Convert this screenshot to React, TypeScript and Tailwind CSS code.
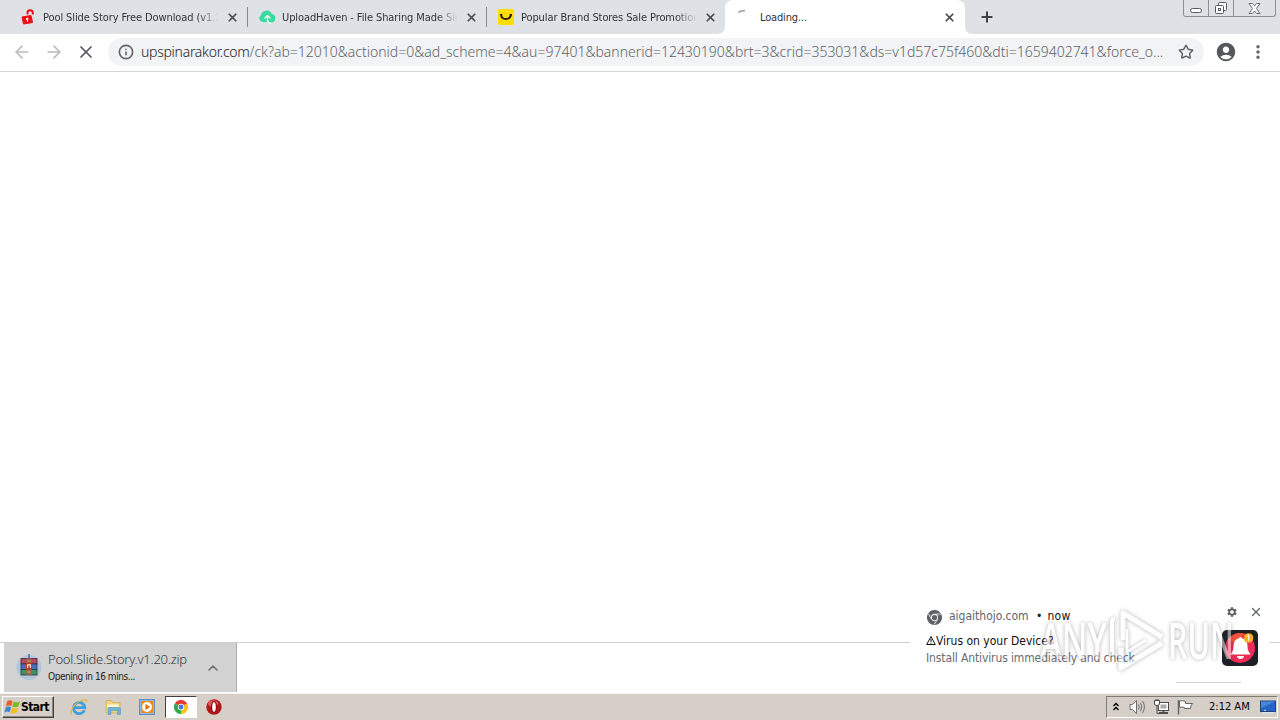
import React from 'react';
import { ArrowLeft, ArrowRight, X, Info, Star, Plus, MoreVertical, ChevronUp } from 'lucide-react';
import { MdSettings, MdAccountCircle } from 'react-icons/md';

const LockIcon = () => (
  <svg width="16" height="16" viewBox="0 0 16 16">
    <path d="M2 8 L11 6.5 L12.5 13.5 L3.5 15 Z" fill="#f00d14" stroke="#f00d14" strokeLinejoin="round" />
    <path d="M7.5 5.5 V4.2 A2.6 2.6 0 0 1 12.8 3.6 V5.5" fill="none" stroke="#e8121c" strokeWidth="1.9" />
    <circle cx="7.2" cy="10" r="1.2" fill="#fff" />
    <path d="M7.2 10 L7.7 12.7" stroke="#fff" strokeWidth="1" />
  </svg>
);

const CloudIcon = () => (
  <svg width="16" height="16" viewBox="0 0 16 16">
    <path d="M4 13 A3.6 3.6 0 0 1 1.8 6.5 A5.8 5.8 0 0 1 12.8 5 A4.2 4.2 0 0 1 12 13.5 Z" fill="#3adb9f" />
    <path d="M5.5 9.5 L8.5 6.5 L11.5 9.5 M8.5 7.5 V12 Q9 14 12 14.5" fill="none" stroke="#e9f8f3" strokeWidth="1.4" />
  </svg>
);

const SmileIcon = () => (
  <svg width="16" height="16" viewBox="0 0 16 16">
    <rect width="16" height="16" rx="1" fill="#ffde00" />
    <path d="M3 5.5 C3.5 11.5 12 11.5 13 5.5" fill="none" stroke="#1c1c1c" strokeWidth="1.9" />
    <path d="M2 5.7 H4.3 M11.7 5.7 H14" stroke="#1c1c1c" strokeWidth="1.3" />
  </svg>
);

const SpinnerIcon = () => (
  <svg width="16" height="16" viewBox="0 0 16 16">
    <path d="M1.5 3.5 Q4 1.2 8 1.6" fill="none" stroke="#a7a9ac" strokeWidth="1.8" />
  </svg>
);

const ChromeIcon = ({ mono = false }: { mono?: boolean }) => (
  <svg width={mono ? 15 : 14} height={mono ? 15 : 14} viewBox="0 0 24 24">
    <path d="M12 12 L1.6 6 A12 12 0 0 1 22.4 6 Z" fill={mono ? '#5f6368' : '#e33b2e'} />
    <path d="M12 12 L22.4 6 A12 12 0 0 1 12 24 Z" fill={mono ? '#5f6368' : '#fbc116'} />
    <path d="M12 12 L12 24 A12 12 0 0 1 1.6 6 Z" fill={mono ? '#5f6368' : '#2da94f'} />
    {mono && <path d="M12 6.5 H22 M7.2 14.7 L2.4 6.5 M16.8 14.7 L12 23" stroke="#d5d7d9" strokeWidth="1.6" />}
    <circle cx="12" cy="12" r="5.5" fill="#fff" />
    <circle cx="12" cy="12" r="4.2" fill={mono ? '#5f6368' : '#3e7be0'} />
  </svg>
);

const WinrarIcon = () => (
  <svg width="26" height="27" viewBox="0 0 26 27">
    <circle cx="13" cy="13.5" r="12.4" fill="#b3c4dd" />
    <path d="M13 0 V4" stroke="#4a72a8" strokeWidth="1.5" />
    <rect x="5" y="4.5" width="16" height="5.5" fill="#b5475f" stroke="#51263a" strokeWidth=".8" />
    <rect x="5" y="10" width="16" height="5.5" fill="#4a6fba" stroke="#26345b" strokeWidth=".8" />
    <rect x="5" y="15.5" width="16" height="5.5" fill="#3f8f5f" stroke="#234331" strokeWidth=".8" />
    <rect x="10.3" y="4.5" width="5.4" height="16.5" fill="#9a6540" />
    <path d="M10 9 H16 V15.5 H10 Z" fill="#c23324" />
    <path d="M11.6 14 V10.8 H14.4 V14" stroke="#f0e8df" fill="none" strokeWidth="1.2" />
    <path d="M11 18 H15 M11 7 H15" stroke="#d3ad73" strokeWidth=".8" />
  </svg>
);

const WindowsFlag = () => (
  <svg width="17" height="16" viewBox="0 0 16 15" className="shrink-0">
    <path d="M3 2.2 Q5.5 .2 8 2 L6.8 6.7 Q4.3 5.2 1.8 7 Z" fill="#ea5b2d" />
    <path d="M9 2.4 Q11.5 4 15 2 L13.7 6.8 Q11 8.8 7.8 7 Z" fill="#7cb928" />
    <path d="M1.6 7.9 Q4.2 6.2 6.6 7.8 L5.3 12.6 Q3 11 .4 12.8 Z" fill="#3786d8" />
    <path d="M7.6 8 Q10.4 9.8 13.4 7.9 L12.2 12.4 Q9.2 14.5 6.3 12.8 Z" fill="#f8bd1d" />
  </svg>
);

const IeIcon = () => (
  <svg width="18" height="18" viewBox="0 0 18 18">
    <path d="M14.4 12.2 A5.6 5.6 0 1 1 14.8 9.6 H4.5" fill="none" stroke="#3d9fdd" strokeWidth="2.8" />
    <path d="M1.6 16.5 C-1 12 6 4 13 2 C16 1 17.3 2 16.3 4.5" fill="none" stroke="#e3b53f" strokeWidth="1.3" />
  </svg>
);

const FolderIcon = () => (
  <svg width="17" height="16" viewBox="0 0 17 16">
    <path d="M1 1.5 H6 L7.5 3.5 H15 V14 H1 Z" fill="#f2d57b" stroke="#cfa94a" strokeWidth=".7" />
    <path d="M2 5.5 H14 V8 H2 Z" fill="#fdf6d6" />
    <path d="M3 15.5 V10 Q3 8.5 4.5 8.5 H14 Q15.5 8.5 15.5 10 V15.5 H12.5 V11.5 H6 V15.5 Z" fill="#67b5dd" stroke="#4b90b8" strokeWidth=".5" />
  </svg>
);

const MediaIcon = () => (
  <svg width="16" height="16" viewBox="0 0 16 16">
    <rect x=".5" y=".5" width="15" height="15" fill="#8fbbe6" stroke="#5b8fc5" />
    <rect x="2" y="2" width="12" height="12" fill="#f08a18" />
    <circle cx="8" cy="8" r="4.9" fill="#fff" />
    <path d="M6.4 4.8 L11.3 8 L6.4 11.2 Z" fill="#e6760c" />
  </svg>
);

const OperaIcon = () => (
  <svg width="16" height="16" viewBox="0 0 16 16">
    <circle cx="8" cy="8" r="7.7" fill="#b0181d" />
    <ellipse cx="7" cy="4.5" rx="5.2" ry="3.3" fill="#dc5a5a" />
    <ellipse cx="8" cy="8" rx="3.1" ry="5.9" fill="#8c0b11" />
    <ellipse cx="8" cy="8" rx="1.8" ry="4.7" fill="#fff" />
  </svg>
);

const SpeakerIcon = () => (
  <svg width="17" height="16" viewBox="0 0 17 16" fill="none">
    <path d="M1 5.5 H3.5 L7.5 1.5 V14.5 L3.5 10.5 H1 Z" fill="#fff" stroke="#6c6c6c" />
    <path d="M9.5 5.5 Q11 8 9.5 10.5 M11.5 3.8 Q14 8 11.5 12.2 M13.5 2 Q17.3 8 13.5 14" stroke="#6c6c6c" />
  </svg>
);

const NetworkIcon = () => (
  <svg width="17" height="16" viewBox="0 0 17 16">
    <rect x="5.5" y="3.5" width="10" height="8" fill="#fff" stroke="#4c4c4c" />
    <rect x="7.5" y="5.5" width="6" height="4" fill="#aaa" />
    <path d="M6 14 H15 M10.5 12 V14" stroke="#4c4c4c" strokeWidth="1.8" />
    <path d="M1.5 1.5 H6.5 V5 Q6.5 6.5 4 6.5 Q1.5 6.5 1.5 5 Z" fill="#fff" stroke="#4c4c4c" />
    <path d="M4 6.5 V14.5 H7 M3 0 V2 M5 0 V2" stroke="#4c4c4c" fill="none" />
  </svg>
);

const FlagIcon = () => (
  <svg width="17" height="16" viewBox="0 0 17 16">
    <path d="M1.5 1 V15.5" stroke="#666" strokeWidth="1.5" />
    <path d="M2.5 2 Q5 1 8.5 2.5 V4.5 H15.5 Q13.5 6.5 13.5 9.5 H7.5 V8.5 Q5 7.5 2.5 8.5 Z" fill="#fff" stroke="#666" />
  </svg>
);

const MonitorIcon = () => (
  <svg width="16" height="14" viewBox="0 0 16 14">
    <rect x=".5" y="1" width="15" height="10.5" fill="#2365c7" stroke="#234478" />
    <path d="M1 1.5 H15 L1 8 Z" fill="#4787d8" />
    <path d="M3 12.8 H13" stroke="#dcebfa" strokeWidth="1.2" />
    <path d="M4 10.3 H6" stroke="#cfe6fb" />
  </svg>
);

const BellIcon = () => (
  <svg width="36" height="36" viewBox="0 0 36 36">
    <rect width="36" height="36" rx="5" fill="#1d2027" />
    <circle cx="18" cy="18" r="15" fill="#ec2c54" />
    <path d="M5.5 10 A15 15 0 0 1 22.5 3.7 L13 13 Z" fill="#f0523b" />
    <path d="M8 24.5 Q11.5 22 11.5 16 Q11.5 9.5 17 8.3 Q18.5 5.5 20 8.3 Q25.5 9.5 25.5 16 Q25.5 22 29 24.5 Z" fill="#fff" />
    <path d="M15 26 H22 Q21.5 29 18.5 29 Q15.5 29 15 26 Z" fill="#fff" />
    <circle cx="26.5" cy="8" r="4.8" fill="#ffab26" />
    <path d="M25.3 6.3 L26.7 5.3 V10.8" fill="none" stroke="#fff" strokeWidth="1.1" />
  </svg>
);

const Watermark = () => (
  <svg width="204" height="76" viewBox="0 0 204 76" className="pointer-events-none absolute left-[1036px] top-[602px] opacity-50 drop-shadow-[0_0_2px_rgba(60,60,60,0.8)]">
    <g fill="none" stroke="#fff" strokeLinejoin="round">
      <path d="M76 54 V20 Q76 17 79 17" strokeWidth="4" />
      <path d="M87 38 V11 L126 35" strokeWidth="5" />
      <path d="M85 46 V66 L126 41" strokeWidth="5" />
      <path d="M91 27 V50 L110 38" strokeWidth="2.5" />
    </g>
    <g fontFamily="Open Sans, sans-serif" fontSize="50" fontWeight="600" fill="#fff">
      <text x="4" y="57" textLength="67" lengthAdjust="spacingAndGlyphs">ANY</text>
      <text x="132" y="57" textLength="66" lengthAdjust="spacingAndGlyphs">RUN</text>
    </g>
  </svg>
);

interface TabProps {
  icon: React.ReactNode;
  title: string;
}

const Tab: React.FC<TabProps> = ({ icon, title }) => (
  <div className="flex h-[34px] w-[239px] shrink-0 items-center pl-3 pr-2">
    <span className="w-4 shrink-0">{icon}</span>
    <span className="ml-[7px] mt-px w-[176px] shrink-0 overflow-hidden whitespace-nowrap text-[11px] leading-4 tracking-[-0.1px] text-[#303338] [mask-image:linear-gradient(to_right,black_88%,transparent)]">
      {title}
    </span>
    <X size={13} strokeWidth={3.2} className="ml-[6.5px] shrink-0 text-[#46494d]" />
  </div>
);

const ActiveTab: React.FC<TabProps> = ({ icon, title }) => (
  <div className="flex h-[34px] w-[240px] shrink-0 items-center rounded-t-lg bg-white pl-3">
    <span className="w-4 shrink-0">{icon}</span>
    <span className="ml-[7px] mt-px w-[176px] shrink-0 whitespace-nowrap text-[11px] leading-4 tracking-[-0.15px] text-[#303338]">{title}</span>
    <X size={13} strokeWidth={3.2} className="ml-[6.5px] shrink-0 text-[#46494d]" />
  </div>
);

const TabStrip = () => (
  <div className="flex h-[34px] items-center bg-[#dee1e6] pl-2">
    <Tab icon={<LockIcon />} title="Pool Slide Story Free Download (v1.20)" />
    <div className="-mr-px h-5 w-px bg-[#85888d]" />
    <Tab icon={<CloudIcon />} title="UploadHaven - File Sharing Made Simple" />
    <div className="-mr-px h-5 w-px bg-[#85888d]" />
    <Tab icon={<SmileIcon />} title="Popular Brand Stores Sale Promotions" />
    <svg width="8" height="8" viewBox="0 0 8 8" className="-ml-2 shrink-0 self-end">
      <path d="M8 0 V8 H0 Q8 8 8 0 Z" fill="#fff" />
    </svg>
    <ActiveTab icon={<SpinnerIcon />} title="Loading..." />
    <svg width="8" height="8" viewBox="0 0 8 8" className="shrink-0 self-end">
      <path d="M0 0 V8 H8 Q0 8 0 0 Z" fill="#fff" />
    </svg>
    <Plus size={16} strokeWidth={3} className="ml-[6px] text-[#3c4043]" />
    <div className="ml-auto mr-[4px] flex h-[17px] w-[93px] shrink-0 self-start rounded-b-[3px] border border-t-0 border-[#8b8f96]">
      <div className="flex w-[25px] items-end justify-center border-r border-[#8b8f96] pb-[3px]">
        <div className="h-[5px] w-3 rounded-sm border border-[#555960] bg-white" />
      </div>
      <div className="flex w-[25px] items-center justify-center border-r border-[#8b8f96]">
        <svg width="14" height="14" viewBox="0 0 14 14" fill="#fff" stroke="#555960">
          <rect x="4.5" y="1.5" width="8" height="8" rx="1" />
          <rect x="1.5" y="4.5" width="8" height="8" rx="1" />
          <rect x="4.5" y="7.5" width="2" height="2" />
        </svg>
      </div>
      <div className="flex flex-1 items-center justify-center">
        <svg width="13" height="11" viewBox="0 0 13 11" fill="#fff" stroke="#666a70">
          <path d="M1 .5 H4.5 L6.5 3 L8.5 .5 H12 L8.5 5.5 L12 10.5 H8.5 L6.5 8 L4.5 10.5 H1 L4.5 5.5 Z" />
        </svg>
      </div>
    </div>
  </div>
);

const Toolbar = () => (
  <div className="flex h-[38px] items-center border-b border-[#d5d6d8] bg-white pb-px pl-3">
    <ArrowLeft size={20} strokeWidth={1.9} className="text-[#b9bbbe]" />
    <ArrowRight size={20} strokeWidth={1.9} className="ml-3 text-[#b9bbbe]" />
    <X size={20} strokeWidth={2.1} className="ml-3 text-[#55585c]" />
    <div className="ml-3 flex h-7 w-[1096px] shrink-0 items-center rounded-full bg-[#f1f3f4] pl-[10px]">
      <Info size={16} strokeWidth={2.4} className="shrink-0 text-[#5f6368]" />
      <div className="ml-[7px] w-[1037px] shrink-0 whitespace-nowrap font-['Noto_Sans',sans-serif] text-[14px] leading-5 font-light text-[#5f6368]">
        <span className="tracking-[-0.27px] text-[#202124]">upspinarakor.com</span>/ck?ab=12010&amp;actionid=0&amp;ad_scheme=4&amp;au=97401&amp;bannerid=12430190&amp;brt=3&amp;crid=353031&amp;ds=v1d57c75f460&amp;dti=1659402741&amp;force_o...
      </div>
      <Star size={16} strokeWidth={2.2} className="shrink-0 text-[#5f6368]" />
    </div>
    <MdAccountCircle size={22} className="ml-[11px] shrink-0 text-[#54575c]" />
    <MoreVertical size={18} strokeWidth={2.6} className="ml-3 shrink-0 text-[#5f6368]" />
  </div>
);

const Notification = () => (
  <div className="absolute left-[910px] top-[597px] flex h-[90px] w-[360px] bg-white pl-4 pt-[11px]">
    <div className="w-[280px]">
      <div className="flex h-4 items-center text-[12px]">
        <div className="ml-px mt-[2px]"><ChromeIcon mono /></div>
        <span className="ml-[7px] w-[79px] whitespace-nowrap text-[#5f6368]">aigaithojo.com</span>
        <span className="ml-2 text-[#202124]">•</span>
        <span className="ml-[5px] tracking-[0.3px] text-[#111]">now</span>
      </div>
      <div className="mt-2 flex h-[17px] items-center whitespace-nowrap text-[12px] text-[#111]">
        <svg width="10" height="11" viewBox="0 0 10 11" fill="none" stroke="#111">
          <path d="M5 1.5 L9.3 9.5 H.7 Z M5 4 V7 M5 7.7 V8.7" />
        </svg>
        <span>Virus on your Device?</span>
      </div>
      <div className="mt-px h-[17px] whitespace-nowrap text-[12px] leading-[17px] tracking-[-0.12px] text-[#696c70]">Install Antivirus immediately and check</div>
    </div>
    <div className="-mt-[11px] ml-4 flex-1">
      <div className="flex h-[30px] items-center pl-[4px]">
        <MdSettings size={12} className="text-[#5f6368]" />
        <X size={14} strokeWidth={2.2} className="ml-[11px] text-[#5f6368]" />
      </div>
      <div className="mt-[3px]"><BellIcon /></div>
    </div>
    <div className="absolute bottom-[4px] left-[266px] h-px w-[65px] bg-[#d2d2d2]" />
  </div>
);

const DownloadBar = () => (
  <div className="flex h-[51px] border-t border-[#cfcfcf] bg-white pb-px pl-1">
    <div className="flex w-[233px] items-center border-r border-[#adadad] bg-[#d2d2d2] pl-3">
      <WinrarIcon />
      <div className="ml-[6px] w-[155px]">
        <div className="h-[18px] whitespace-nowrap font-['Noto_Sans',sans-serif] text-[13px] leading-[16px] font-light tracking-[-0.24px] text-[#33373a]">Pool.Slide.Story.v1.20.zip</div>
        <div className="h-4 whitespace-nowrap text-[10px] leading-4 tracking-[-0.45px] text-[#222]">Opening in 16 mins...</div>
      </div>
      <ChevronUp size={16} strokeWidth={2.4} className="ml-[2px] text-[#707070]" />
    </div>
  </div>
);

const Taskbar = () => (
  <div className="flex h-[27px] items-center border-t border-[#f7f5f1] bg-[#d6cfc7]">
    <div className="ml-[2px] flex h-[22px] w-[52px] items-center border border-b-[#404040] border-l-white border-r-[#404040] border-t-white pl-px shadow-[inset_-1px_-1px_0_#8b867e]">
      <WindowsFlag />
      <span className="text-[12px] font-bold tracking-[-0.55px] text-black">Start</span>
    </div>
    <div className="ml-[16px] flex w-[18px]"><IeIcon /></div>
    <div className="ml-[17px] flex w-[17px]"><FolderIcon /></div>
    <div className="ml-[17px] flex w-4"><MediaIcon /></div>
    <div className="ml-[10px] flex h-[22px] w-8 items-center justify-center border border-b-white border-l-[#404040] border-r-white border-t-[#404040] bg-white"><ChromeIcon /></div>
    <div className="ml-[9px] flex"><OperaIcon /></div>
    <div className="ml-auto mr-[2px] flex h-[22px] w-[172px] items-center border border-b-white border-l-[#807b73] border-r-white border-t-[#807b73] pl-[5px]">
      <svg width="8" height="10" viewBox="0 0 8 10" fill="none" stroke="#000" strokeWidth="1.4">
        <path d="M1.5 4 L4 1.5 L6.5 4 M1.5 8 L4 5.5 L6.5 8" />
      </svg>
      <div className="ml-[9px]"><SpeakerIcon /></div>
      <div className="ml-[7px]"><NetworkIcon /></div>
      <div className="ml-[7px]"><FlagIcon /></div>
      <span className="ml-[15px] w-[42px] whitespace-nowrap text-[11px] text-black">2:12 AM</span>
      <div className="ml-[9px] shrink-0"><MonitorIcon /></div>
    </div>
  </div>
);

export default function App() {
  return (
    <div className="relative flex h-[720px] w-[1280px] flex-col overflow-hidden bg-white font-['DejaVu_Sans_Condensed','DejaVu_Sans',sans-serif]">
      <TabStrip />
      <Toolbar />
      <div className="flex-1 bg-white" />
      <DownloadBar />
      <Taskbar />
      <Notification />
      <Watermark />
    </div>
  );
}
